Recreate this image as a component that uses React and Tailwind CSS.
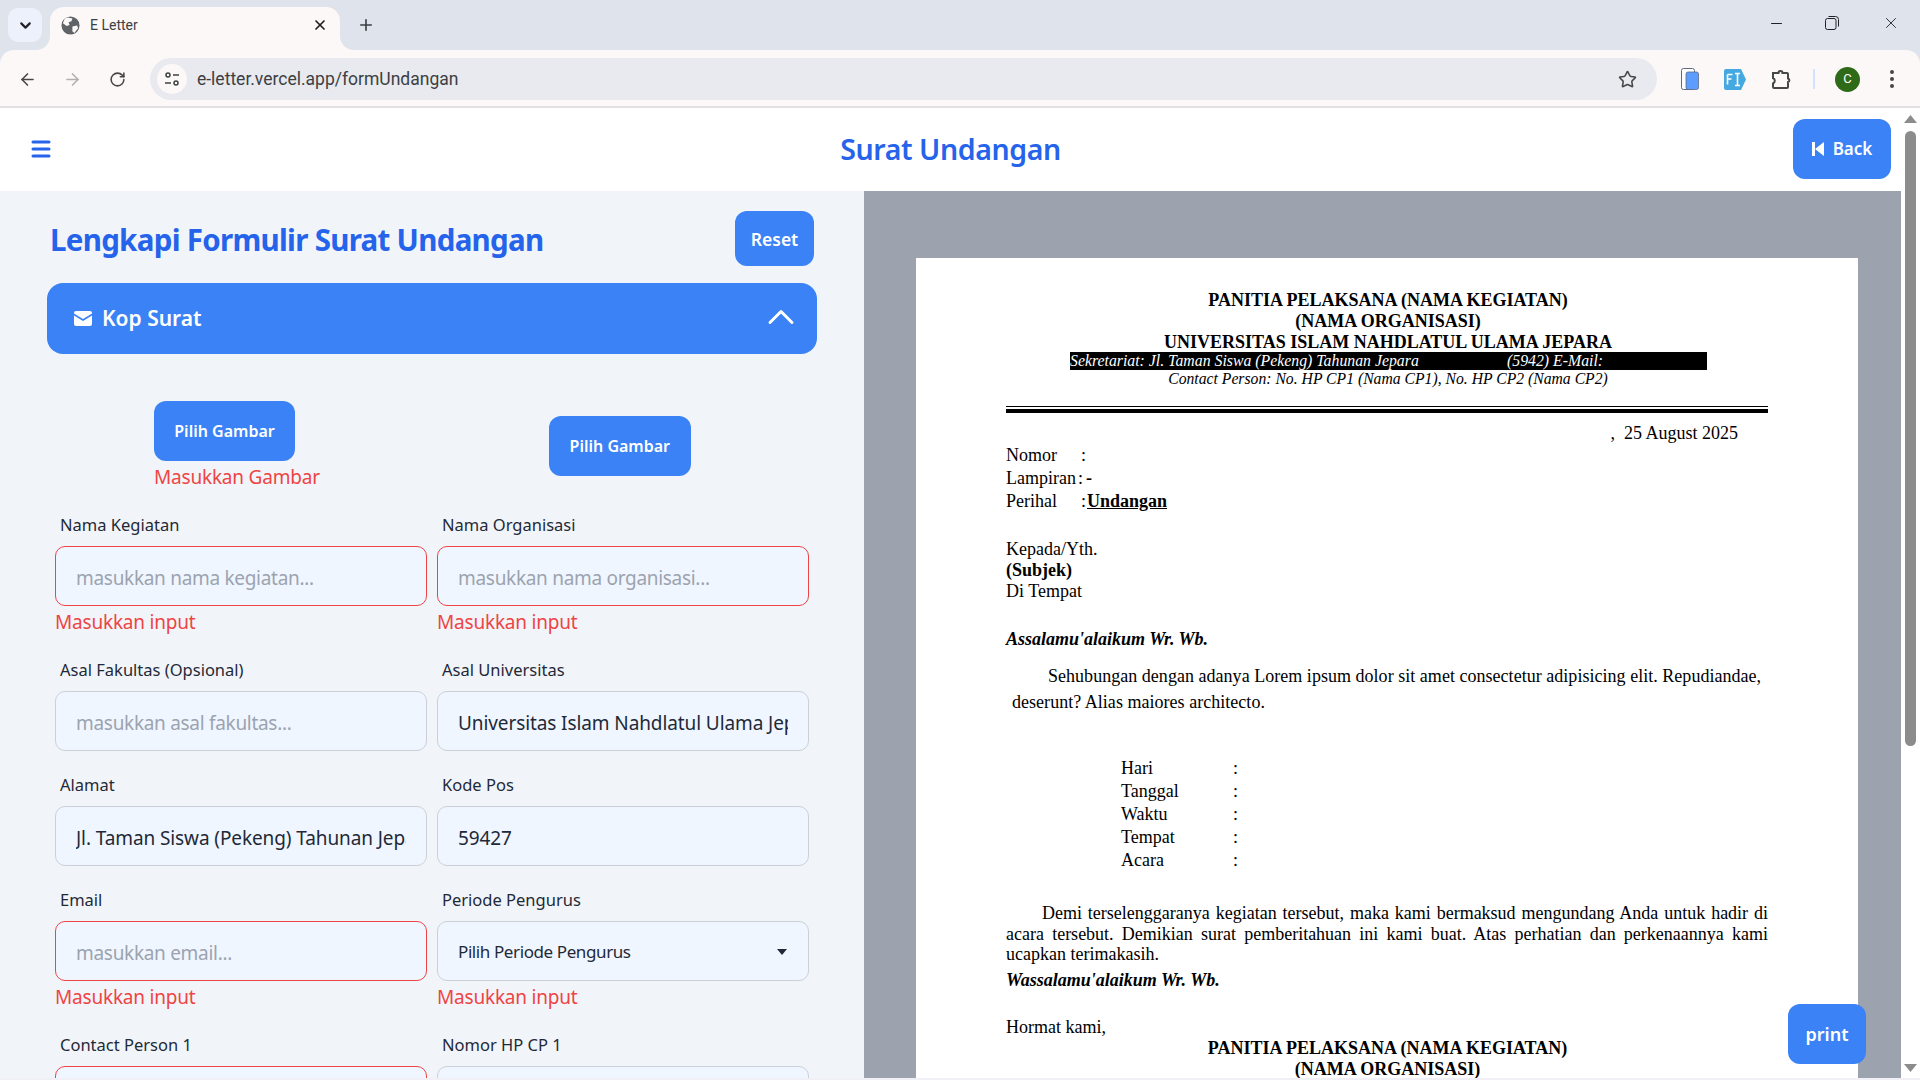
import React from 'react';
import { ArrowLeft, ArrowRight, RotateCw, Star, X, Plus, ChevronDown, ChevronUp, Menu, Minus } from 'lucide-react';

const ErrorText = () => (
    <p className="mt-[2px] h-[28px] text-[19px] leading-[28px] tracking-[-0.2px] text-[#ef4444]">Masukkan input</p>
);

const Field = ({ label, placeholder, value, error }) => (
    <div className="w-[372px]">
        <label className="block h-[21px] pl-[5px] text-[16.5px] leading-[19px] text-[#1f2937]">{label}</label>
        <input
            readOnly
            placeholder={placeholder}
            value={value || ''}
            className={`mt-[10px] block h-[60px] w-full rounded-[10px] border bg-[#eff6ff] pl-[20px] pr-[20px] pt-[3px] text-[19px] tracking-[-0.1px] text-[#1f2937] outline-none placeholder:tracking-[-0.3px] placeholder:text-[#9ca3af] ${error ? 'border-[#ef4444]' : 'border-[#cbd0d8]'}`}
        />
        {error && <ErrorText />}
    </div>
);

const TabCorner = ({ className, d }) => (
    <svg viewBox="0 0 14 14" className={`absolute top-[36px] h-[14px] w-[14px] fill-[#fdf8f8] ${className}`}>
        <path d={d} />
    </svg>
);

const ChromeBar = () => (
    <div className="bg-[#dfe3ec] font-['Roboto',sans-serif]">
        <div className="relative flex h-[50px]">
            <div className="ml-[8px] mt-[8px] flex h-[34px] w-[34px] items-center justify-center rounded-[10px] bg-[#edf1fc]">
                <ChevronDown className="h-[17px] w-[17px] text-[#202124]" strokeWidth={3} />
            </div>
            <TabCorner className="left-[36px]" d="M14 0v14H0a14 14 0 0 0 14-14z" />
            <div className="ml-[8px] mt-[7px] flex h-[43px] w-[290px] items-center rounded-t-[14px] bg-[#fdf8f8] pb-[7px] pl-[11px] pr-[12px]">
                <svg viewBox="0 0 20 20" className="h-[19px] w-[19px] text-[#5f6368]">
                    <circle cx="10" cy="10" r="9.5" fill="currentColor" />
                    <path d="M7 1.5l5 1-1 3-3 1 1 3-3 1-4-3 2-5zM12 11l5-1 1 3-4 5-2-2z" fill="#fdf8f8" />
                </svg>
                <span className="ml-[10px] flex-1 text-[14px] text-[#3c4043]">E Letter</span>
                <X className="h-[16px] w-[16px] text-[#202124]" strokeWidth={2.6} />
            </div>
            <TabCorner className="left-[340px]" d="M0 0v14h14A14 14 0 0 1 0 0z" />
            <Plus className="ml-[17px] mt-[16px] h-[18px] w-[18px] text-[#3c4043]" strokeWidth={2.2} />
            <div className="ml-auto flex h-[46px] items-center">
                <Minus className="mr-[40px] h-[17px] w-[17px] text-[#202124]" strokeWidth={1.6} />
                <svg viewBox="0 0 14 14" className="mr-[43px] h-[14px] w-[14px] fill-none stroke-[#202124]">
                    <rect x="0.5" y="2.5" width="10.5" height="11" rx="2" />
                    <path d="M3.5 0.5h7a3 3 0 0 1 3 3v7" />
                </svg>
                <X className="mr-[20px] h-[18px] w-[18px] text-[#202124]" strokeWidth={1.2} />
            </div>
        </div>
        <div className="flex h-[58px] items-center rounded-t-[14px] border-b-2 border-[#e4e0e2] bg-[#fdf8f8] pt-[2px]">
            <ArrowLeft className="ml-[18px] h-[19px] w-[19px] text-[#474747]" strokeWidth={2} />
            <ArrowRight className="ml-[26px] h-[19px] w-[19px] text-[#b0b0b0]" strokeWidth={2} />
            <RotateCw className="ml-[27px] h-[17px] w-[17px] text-[#474747]" strokeWidth={2.2} />
            <div className="ml-[24px] flex h-[42px] w-[1507px] items-center rounded-full bg-[#e8eaef]">
                <div className="ml-[7px] flex h-[30px] w-[30px] items-center justify-center rounded-full bg-[#fdf8f8]">
                    <svg viewBox="0 0 16 16" className="h-[16px] w-[16px] fill-none stroke-[#3c4043] stroke-[1.5]">
                        <circle cx="4" cy="4" r="2" />
                        <path d="M9 4h6M1 12h6" />
                        <circle cx="12" cy="12" r="2" />
                    </svg>
                </div>
                <span className="ml-[10px] flex-1 text-[17.5px] text-[#3c4043]">e-letter.vercel.app/formUndangan</span>
                <Star className="mr-[20px] h-[19px] w-[19px] text-[#474747]" strokeWidth={2} />
            </div>
            <svg viewBox="0 0 18 22" className="ml-[24px] h-[22px] w-[18px]">
                <rect x="0.5" y="0.5" width="13" height="21" rx="2" fill="#fff" stroke="#5f6a80" />
                <rect x="5" y="4" width="12.5" height="17.5" rx="2" fill="#5c9dff" stroke="#5f6a80" strokeWidth="0.8" />
            </svg>
            <svg viewBox="0 0 22 21" className="ml-[25px] h-[21px] w-[22px]">
                <path d="M2 0h15l5 10.5-5 10.5H2a2 2 0 0 1-2-2V2a2 2 0 0 1 2-2z" fill="#45a8e0" />
                <path d="M3.5 5.5h5M3.5 5.5v10M3.5 10h4M11 4.5h5M13.5 4.5v12M11 16.5h5" stroke="#fff" strokeWidth="1.6" fill="none" />
            </svg>
            <svg viewBox="0 0 21 21" className="ml-[25px] h-[21px] w-[21px] fill-none stroke-[#474747] stroke-2">
                <path d="M2 4h5.5a2 2 0 0 1 4 0H16a1 1 0 0 1 1 1v4.5a1.8 1.8 0 0 1 0 3.5V18a1 1 0 0 1-1 1H3a1 1 0 0 1-1-1v-3.5a3 3 0 0 0 0-5.5z" />
            </svg>
            <div className="ml-[21px] h-[20px] w-[2px] bg-[#d3e3fd]" />
            <div className="ml-[20px] flex h-[25px] w-[25px] items-center justify-center rounded-full bg-[#2f6a19] text-[13px] text-white">C</div>
            <svg viewBox="0 0 4 18" className="ml-[30px] h-[18px] w-[4px] fill-[#474747]">
                <circle cx="2" cy="2" r="2" />
                <circle cx="2" cy="9" r="2" />
                <circle cx="2" cy="16" r="2" />
            </svg>
        </div>
    </div>
);

const FormPanel = () => (
    <div className="h-full w-[864px] shrink-0 overflow-hidden bg-[#f1f5f9] font-['Noto_Sans',sans-serif]">
        <div className="flex items-center justify-between pl-[50px] pr-[50px] pt-[20px]">
            <h1 className="pt-[2px] text-[29.5px] font-bold leading-[40px] tracking-[-0.7px] text-[#2563eb]">Lengkapi Formulir Surat Undangan</h1>
            <button className="h-[55px] w-[79px] rounded-xl bg-[#3b82f6] pt-[2px] text-[17.5px] font-semibold text-white">Reset</button>
        </div>
        <div className="mx-[47px] mt-[17px] flex h-[71px] items-center rounded-2xl bg-[#3b82f6] pl-[27px] pr-[14px] text-white">
            <svg viewBox="0 0 18 15" className="h-[15px] w-[18px] fill-white">
                <path d="M2 0h14a2 2 0 0 1 2 2v.6L9 8 0 2.6V2a2 2 0 0 1 2-2z" />
                <path d="M0 4.6l9 5.4 9-5.4V13a2 2 0 0 1-2 2H2a2 2 0 0 1-2-2z" />
            </svg>
            <span className="ml-[10px] flex-1 pt-[1px] text-[21px] font-semibold">Kop Surat</span>
            <ChevronUp className="mb-[3px] h-[44px] w-[44px]" strokeWidth={1.6} />
        </div>
        <div className="mt-[47px] flex items-start pl-[154px]">
            <div>
                <button className="h-[60px] w-[141px] rounded-xl bg-[#3b82f6] text-[16px] font-semibold text-white">Pilih Gambar</button>
                <p className="mt-[2px] text-[19px] leading-[28px] tracking-[-0.2px] text-[#ef4444]">Masukkan Gambar</p>
            </div>
            <button className="ml-[229px] mt-[15px] h-[60px] w-[142px] rounded-xl bg-[#3b82f6] text-[16px] font-semibold text-white">Pilih Gambar</button>
        </div>
        <div className="mt-[24px] grid grid-cols-[372px_372px] gap-x-[10px] gap-y-[24px] pl-[55px]">
            <Field label="Nama Kegiatan" placeholder="masukkan nama kegiatan..." error />
            <Field label="Nama Organisasi" placeholder="masukkan nama organisasi..." error />
            <Field label="Asal Fakultas (Opsional)" placeholder="masukkan asal fakultas..." />
            <Field label="Asal Universitas" value="Universitas Islam Nahdlatul Ulama Jepara" />
            <Field label="Alamat" value="Jl. Taman Siswa (Pekeng) Tahunan Jepara" />
            <Field label="Kode Pos" value="59427" />
            <Field label="Email" placeholder="masukkan email..." error />
            <div className="w-[372px]">
                <label className="block h-[21px] pl-[5px] text-[16.5px] leading-[19px] text-[#1f2937]">Periode Pengurus</label>
                <div className="mt-[10px] flex h-[60px] items-center justify-between rounded-[10px] border border-[#cbd0d8] bg-[#eff6ff] pl-[20px] pr-[21px] pt-[2px] text-[17px] tracking-[-0.4px] text-[#1f2937]">
                    Pilih Periode Pengurus
                    <svg viewBox="0 0 10 6" className="h-[6px] w-[10px] fill-[#1f2937]"><path d="M0 0h10L5 6z" /></svg>
                </div>
                <ErrorText />
            </div>
            <Field label="Contact Person 1" error />
            <Field label="Nomor HP CP 1" />
        </div>
    </div>
);

const Letter = () => (
    <div className="flex-1 overflow-hidden bg-[#9ca3af] pl-[52px] pt-[67px] font-['Liberation_Serif',serif] text-black">
        <div className="h-[1000px] w-[942px] bg-white pl-[90px] pr-[90px] pt-[32px] text-[18px] leading-[21px]">
            <div className="pl-[2px] text-center font-bold">
                <p>PANITIA PELAKSANA (NAMA KEGIATAN)</p>
                <p>(NAMA ORGANISASI)</p>
                <p className="h-[20px]">UNIVERSITAS ISLAM NAHDLATUL ULAMA JEPARA</p>
            </div>
            <div className="ml-[64px] flex h-[18px] w-[637px] bg-black text-[15.8px] italic leading-[18px] text-white">
                <span className="w-[437px]">Sekretariat: Jl. Taman Siswa (Pekeng) Tahunan Jepara</span>
                <span>(5942) E-Mail:</span>
            </div>
            <p className="pl-[2px] text-center text-[15.7px] italic leading-[18px]">Contact Person: No. HP CP1 (Nama CP1), No. HP CP2 (Nama CP2)</p>
            <div className="mt-[18px] h-[7px] border-b-[4px] border-t-[1px] border-black" />
            <p className="mt-[10px] pr-[30px] text-right">,&nbsp; 25 August 2025</p>
            <div className="leading-[23px]">
                <div className="flex"><span className="w-[75px]">Nomor</span><span>:</span></div>
                <div className="flex"><span className="w-[72px]">Lampiran</span><span>:<b className="ml-[3px]">-</b></span></div>
                <div className="flex"><span className="w-[75px]">Perihal</span><span>:<b className="ml-[1px] underline">Undangan</b></span></div>
            </div>
            <div className="mt-[26px] leading-[21px]">
                <p>Kepada/Yth.</p>
                <p className="font-bold">(Subjek)</p>
                <p>Di Tempat</p>
            </div>
            <p className="mt-[27px] font-bold italic">Assalamu'alaikum Wr. Wb.</p>
            <div className="mt-[13px] pl-[6px] leading-[26px] tracking-[0.03px]">
                <p className="indent-[36px]">Sehubungan dengan adanya Lorem ipsum dolor sit amet consectetur adipisicing elit. Repudiandae, deserunt? Alias maiores architecto.</p>
            </div>
            <div className="ml-[115px] mt-[42px] leading-[23px]">
                {['Hari', 'Tanggal', 'Waktu', 'Tempat', 'Acara'].map((item) => (
                    <div key={item} className="flex"><span className="w-[112px]">{item}</span><span>:</span></div>
                ))}
            </div>
            <p className="mt-[31px] text-justify indent-[36px] leading-[20.5px]">Demi terselenggaranya kegiatan tersebut, maka kami bermaksud mengundang Anda untuk hadir di acara tersebut. Demikian surat pemberitahuan ini kami buat. Atas perhatian dan perkenaannya kami ucapkan terimakasih.</p>
            <p className="mt-[5px] font-bold italic">Wassalamu'alaikum Wr. Wb.</p>
            <p className="mt-[26px]">Hormat kami,</p>
            <div className="pl-[1px] text-center font-bold">
                <p>PANITIA PELAKSANA (NAMA KEGIATAN)</p>
                <p>(NAMA ORGANISASI)</p>
            </div>
        </div>
    </div>
);

const App = () => (
    <div className="relative flex h-screen flex-col overflow-hidden bg-white">
        <ChromeBar />
        <div className="flex min-h-0 flex-1">
            <div className="flex min-w-0 flex-1 flex-col">
                <header className="grid h-[83px] shrink-0 grid-cols-[1fr_auto_1fr] items-center bg-white font-['Noto_Sans',sans-serif]">
                    <Menu className="mb-[2px] ml-[29px] h-[24px] w-[24px] text-[#2563eb]" strokeWidth={3} />
                    <h1 className="text-[28.5px] font-semibold tracking-[-0.4px] text-[#2563eb]">Surat Undangan</h1>
                    <button className="mb-[2px] mr-[10px] flex h-[60px] w-[98px] items-center justify-center gap-[9px] justify-self-end rounded-xl bg-[#3b82f6] text-[17px] font-semibold text-white">
                        <svg viewBox="0 0 12 14" className="h-[14px] w-[12px] fill-white">
                            <path d="M0 0h3v14H0zM12 0v14L3 7z" />
                        </svg>
                        Back
                    </button>
                </header>
                <div className="flex min-h-0 flex-1">
                    <FormPanel />
                    <Letter />
                </div>
            </div>
            <div className="flex w-[19px] shrink-0 flex-col items-center bg-white pt-[7px]">
                <svg viewBox="0 0 13 8" className="h-[8px] w-[13px] fill-[#8c8c8c]"><path d="M6.5 0L13 8H0z" /></svg>
                <div className="mt-[8px] h-[615px] w-[11px] rounded-full bg-[#8c8c8c]" />
                <svg viewBox="0 0 13 8" className="mb-[6px] mt-auto h-[8px] w-[13px] fill-[#8c8c8c]"><path d="M0 0h13L6.5 8z" /></svg>
            </div>
        </div>
        <div className="h-[2px] shrink-0 bg-[#f1f0f6]" />
        <button className="absolute left-[1788px] top-[1004px] h-[60px] w-[78px] rounded-xl bg-[#3b82f6] font-['Noto_Sans',sans-serif] text-[18px] font-semibold text-white">print</button>
    </div>
);

export default App;
